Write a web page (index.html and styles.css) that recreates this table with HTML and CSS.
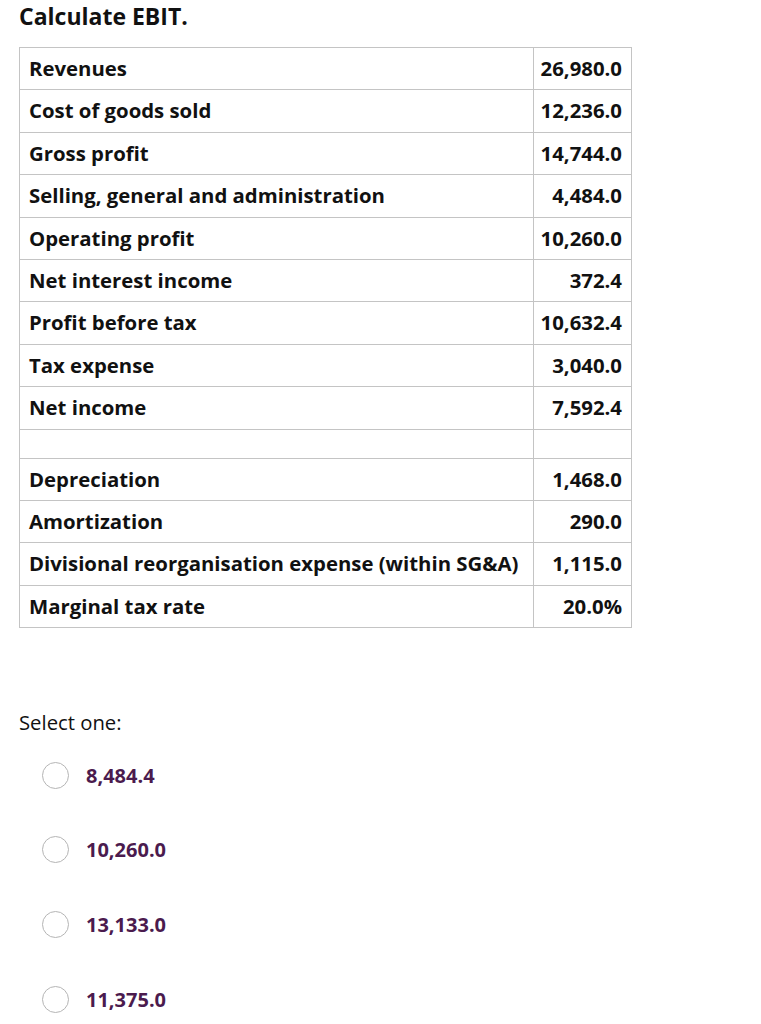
FILE: index.html
```html
<!DOCTYPE html>
<html>
<head>
<meta charset="utf-8">
<link rel="stylesheet" href="styles.css">
</head>
<body>
<div class="page">
  <h1 class="title">Calculate EBIT.</h1>
  <table class="fin">
    <tr><td>Revenues</td><td class="num">26,980.0</td></tr>
    <tr><td>Cost of goods sold</td><td class="num">12,236.0</td></tr>
    <tr><td>Gross profit</td><td class="num">14,744.0</td></tr>
    <tr><td>Selling, general and administration</td><td class="num">4,484.0</td></tr>
    <tr><td>Operating profit</td><td class="num">10,260.0</td></tr>
    <tr><td>Net interest income</td><td class="num">372.4</td></tr>
    <tr><td>Profit before tax</td><td class="num">10,632.4</td></tr>
    <tr><td>Tax expense</td><td class="num">3,040.0</td></tr>
    <tr><td>Net income</td><td class="num">7,592.4</td></tr>
    <tr class="empty"><td></td><td></td></tr>
    <tr><td>Depreciation</td><td class="num">1,468.0</td></tr>
    <tr><td>Amortization</td><td class="num">290.0</td></tr>
    <tr><td>Divisional reorganisation expense (within SG&amp;A)</td><td class="num">1,115.0</td></tr>
    <tr><td>Marginal tax rate</td><td class="num">20.0%</td></tr>
  </table>
  <div class="prompt">Select one:</div>
  <div class="options">
    <label class="option"><span class="radio"></span><span class="opt-text">8,484.4</span></label>
    <label class="option"><span class="radio"></span><span class="opt-text">10,260.0</span></label>
    <label class="option"><span class="radio"></span><span class="opt-text">13,133.0</span></label>
    <label class="option"><span class="radio"></span><span class="opt-text">11,375.0</span></label>
  </div>
</div>
</body>
</html>
```

FILE: styles.css
```css
html, body {
  margin: 0;
  padding: 0;
  background: #fff;
}
.page {
  padding: 0 0 0 19px;
  font-family: "Open Sans", "Liberation Sans", sans-serif;
  color: #111;
}
.title {
  margin: 0;
  padding-top: 1px;
  font-size: 23px;
  font-weight: 700;
  line-height: 30px;
  height: 46px;
}
.fin {
  border-collapse: collapse;
  table-layout: fixed;
  width: 613px;
  font-size: 20.35px;
  font-weight: 700;
}
.fin td {
  border: 1px solid #c4c4c4;
  padding: 8px 9px;
  line-height: 25.4px;
  white-space: nowrap;
}
.fin td.num {
  text-align: right;
  width: 84px;
  padding-left: 4px;
}
.fin tr.empty td {
  height: 28px;
  padding: 0;
}
.prompt {
  margin-top: 80px;
  font-size: 20.3px;
  font-weight: 400;
  line-height: 28px;
}
.options {
  display: flex;
  flex-direction: column;
  margin-top: 25px;
  padding-left: 23px;
  gap: 46.7px;
}
.option {
  display: flex;
  align-items: center;
  height: 28px;
  gap: 17px;
}
.radio {
  width: 27px;
  height: 27px;
  border: 1px solid #b5b5b5;
  border-radius: 50%;
  box-sizing: border-box;
  flex: none;
}
.opt-text {
  color: #4b1b4e;
  font-size: 20px;
  font-weight: 700;
}
```
